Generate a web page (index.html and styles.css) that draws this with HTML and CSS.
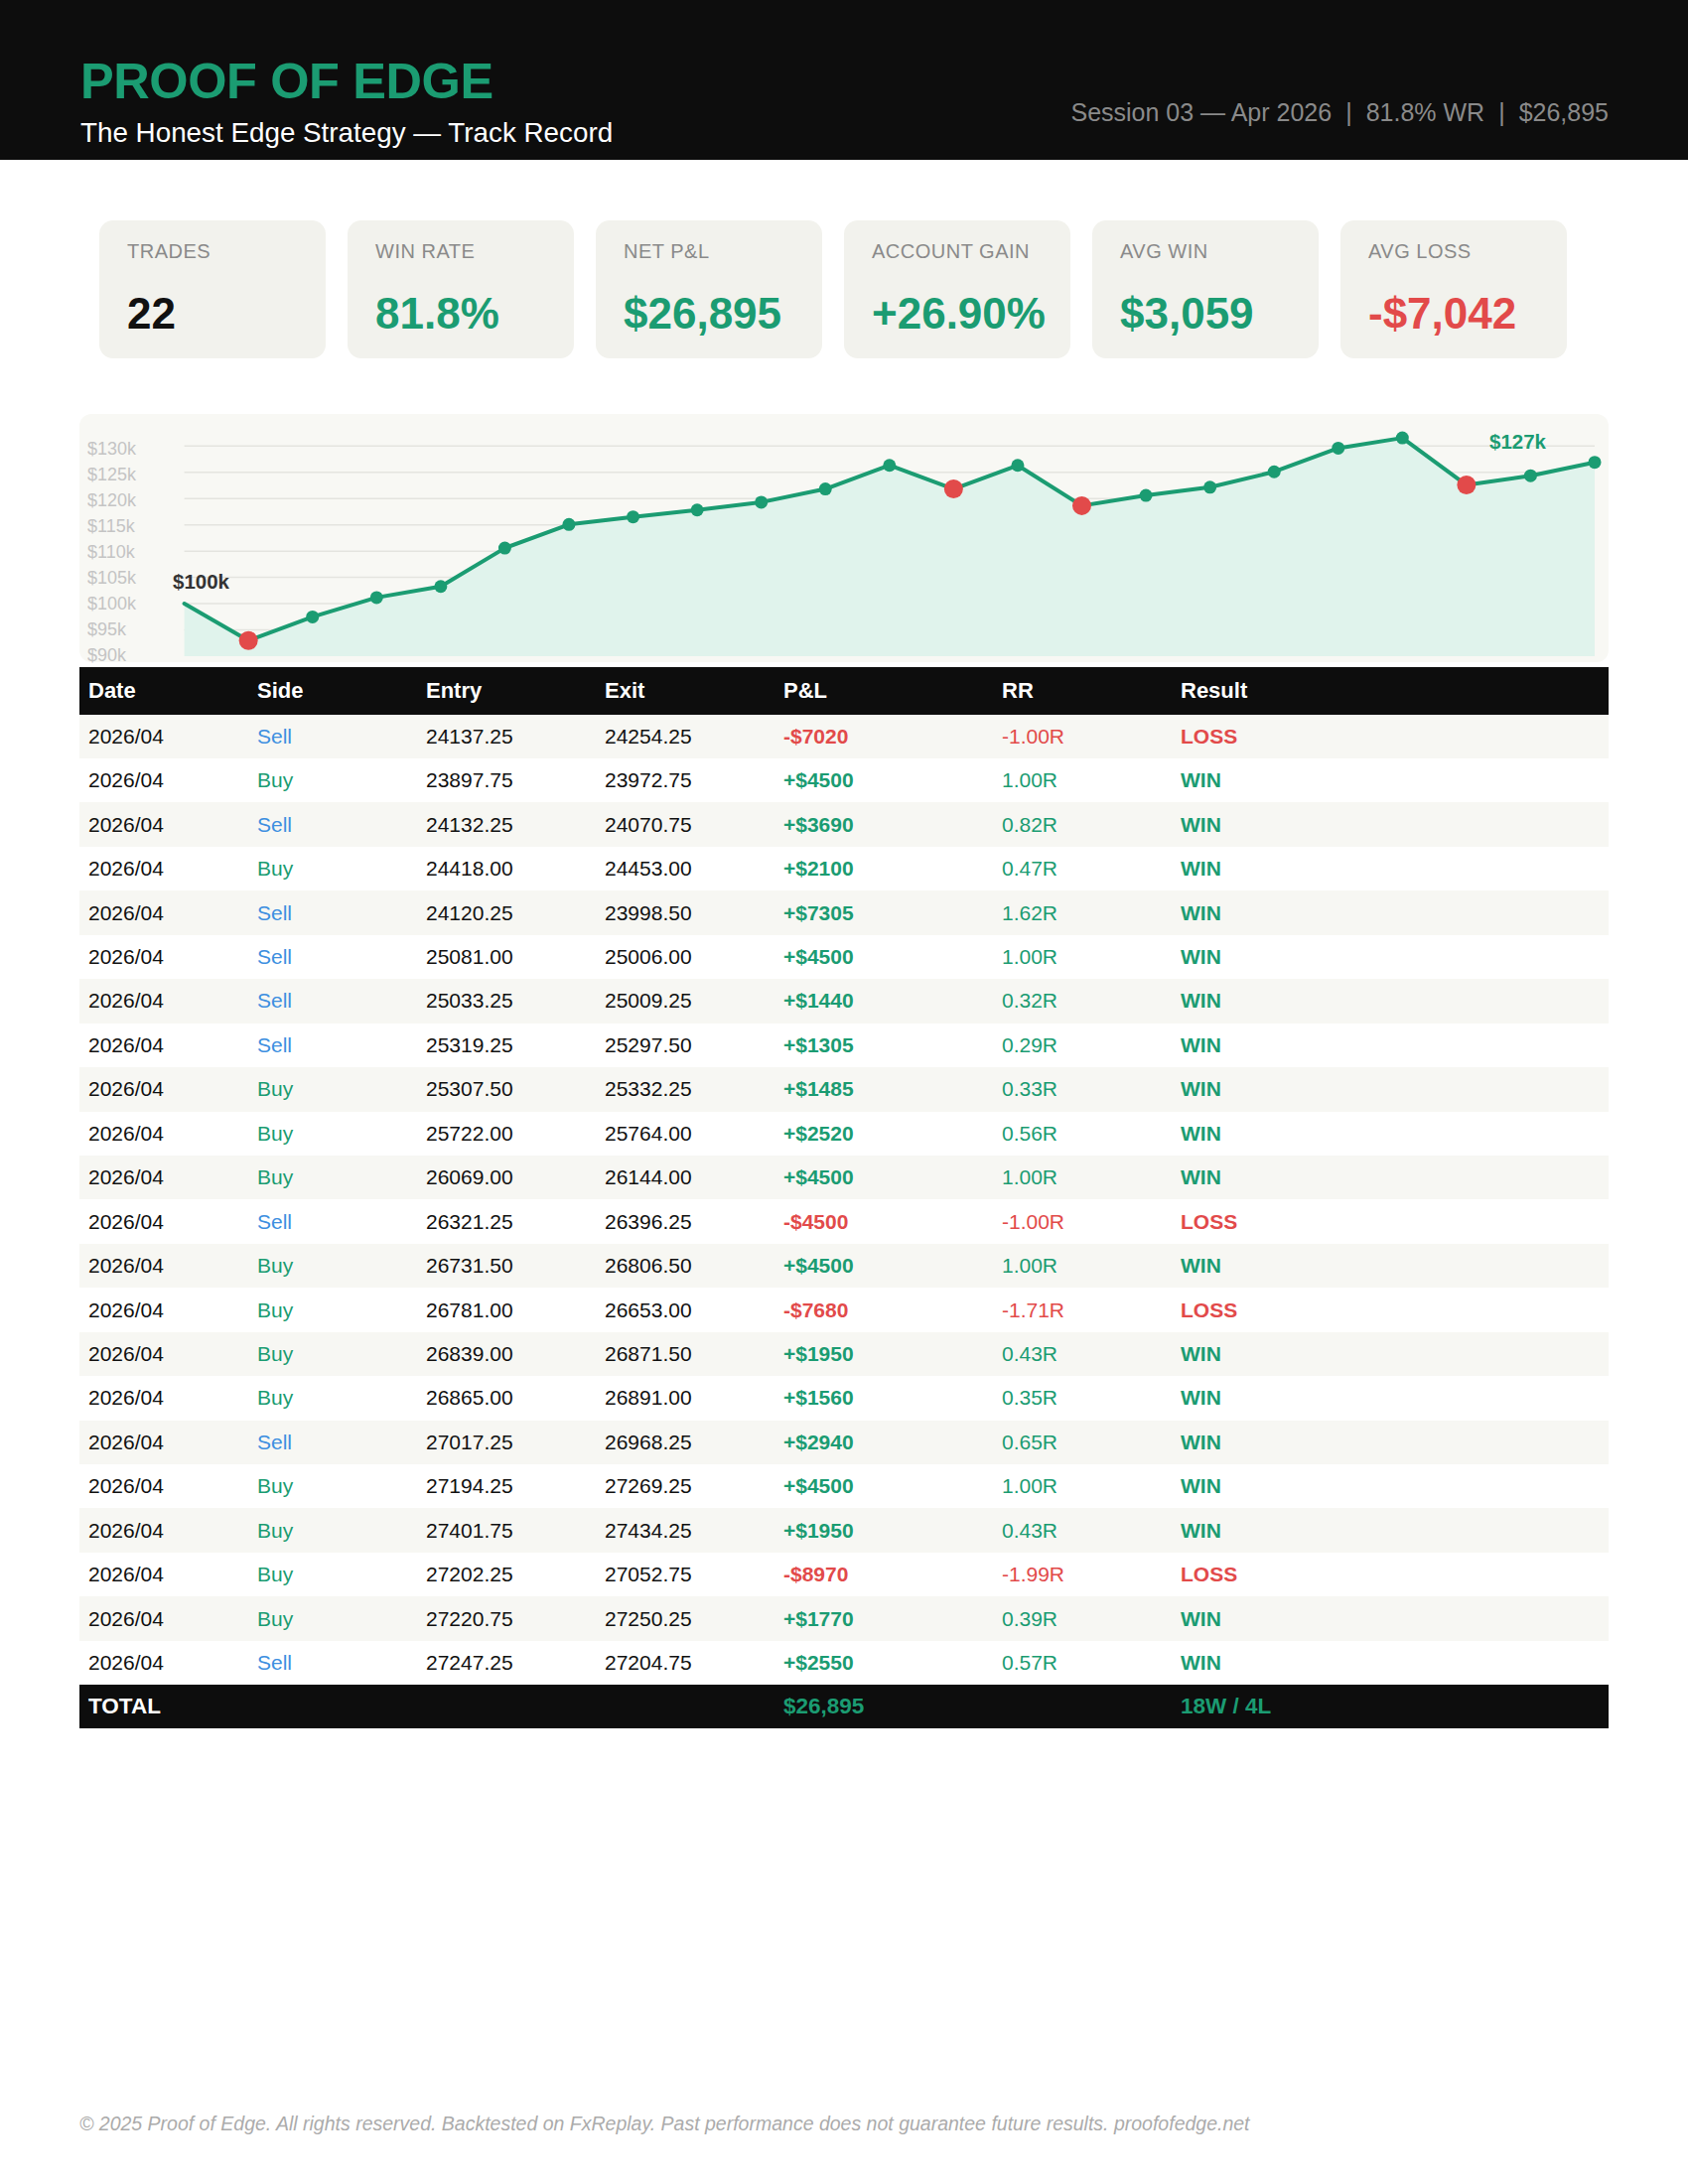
FILE: index.html
```html
<!DOCTYPE html>
<html lang="en">
<head>
<meta charset="utf-8">
<title>Proof of Edge — Track Record</title>
<link rel="stylesheet" href="styles.css">
</head>
<body>
<div class="page">
  <header class="hero">
    <div class="brand">
      <h1 class="title">PROOF OF EDGE</h1>
      <div class="subtitle">The Honest Edge Strategy — Track Record</div>
    </div>
    <div class="meta">Session 03 — Apr 2026<span class="sep">|</span>81.8% WR<span class="sep">|</span>$26,895</div>
  </header>

  <section class="stats">
    <div class="card"><div class="label">TRADES</div><div class="value dark">22</div></div>
    <div class="card"><div class="label">WIN RATE</div><div class="value pos">81.8%</div></div>
    <div class="card"><div class="label">NET P&amp;L</div><div class="value pos">$26,895</div></div>
    <div class="card"><div class="label">ACCOUNT GAIN</div><div class="value pos">+26.90%</div></div>
    <div class="card"><div class="label">AVG WIN</div><div class="value pos">$3,059</div></div>
    <div class="card"><div class="label">AVG LOSS</div><div class="value neg">-$7,042</div></div>
  </section>

  <section class="chart">
    <svg class="chart-svg" width="1540" height="250" viewBox="0 0 1540 250">
      <g class="grid">
        <line x1="105.6" x2="1526" y1="32.28" y2="32.28"/>
        <line x1="105.6" x2="1526" y1="58.75" y2="58.75"/>
        <line x1="105.6" x2="1526" y1="85.21" y2="85.21"/>
        <line x1="105.6" x2="1526" y1="111.68" y2="111.68"/>
        <line x1="105.6" x2="1526" y1="138.14" y2="138.14"/>
        <line x1="105.6" x2="1526" y1="164.61" y2="164.61"/>
        <line x1="105.6" x2="1526" y1="191.07" y2="191.07"/>
        <line x1="105.6" x2="1526" y1="217.54" y2="217.54"/>
      </g>
      <g class="axis">
        <text x="8" y="40.6">$130k</text>
        <text x="8" y="66.7">$125k</text>
        <text x="8" y="92.8">$120k</text>
        <text x="8" y="118.9">$115k</text>
        <text x="8" y="144.9">$110k</text>
        <text x="8" y="171.0">$105k</text>
        <text x="8" y="197.1">$100k</text>
        <text x="8" y="223.2">$95k</text>
        <text x="8" y="249.3">$90k</text>
      </g>
      <polygon class="area" points="105.6,191.07 170.16,228.23 234.73,204.41 299.29,184.88 363.86,173.76 428.42,135.10 492.98,111.28 557.55,103.66 622.11,96.75 686.68,88.89 751.24,75.55 815.80,51.73 880.37,75.55 944.93,51.73 1009.50,92.38 1074.06,82.06 1138.62,73.80 1203.19,58.24 1267.75,34.42 1332.32,24.10 1396.88,71.58 1461.44,62.21 1526.01,48.72 1526.01,244 105.6,244"/>
      <polyline class="line" points="105.6,191.07 170.16,228.23 234.73,204.41 299.29,184.88 363.86,173.76 428.42,135.10 492.98,111.28 557.55,103.66 622.11,96.75 686.68,88.89 751.24,75.55 815.80,51.73 880.37,75.55 944.93,51.73 1009.50,92.38 1074.06,82.06 1138.62,73.80 1203.19,58.24 1267.75,34.42 1332.32,24.10 1396.88,71.58 1461.44,62.21 1526.01,48.72"/>
      <g class="dot-win">
        <circle cx="234.73" cy="204.41" r="6.5"/>
        <circle cx="299.29" cy="184.88" r="6.5"/>
        <circle cx="363.86" cy="173.76" r="6.5"/>
        <circle cx="428.42" cy="135.10" r="6.5"/>
        <circle cx="492.98" cy="111.28" r="6.5"/>
        <circle cx="557.55" cy="103.66" r="6.5"/>
        <circle cx="622.11" cy="96.75" r="6.5"/>
        <circle cx="686.68" cy="88.89" r="6.5"/>
        <circle cx="751.24" cy="75.55" r="6.5"/>
        <circle cx="815.80" cy="51.73" r="6.5"/>
        <circle cx="944.93" cy="51.73" r="6.5"/>
        <circle cx="1074.06" cy="82.06" r="6.5"/>
        <circle cx="1138.62" cy="73.80" r="6.5"/>
        <circle cx="1203.19" cy="58.24" r="6.5"/>
        <circle cx="1267.75" cy="34.42" r="6.5"/>
        <circle cx="1332.32" cy="24.10" r="6.5"/>
        <circle cx="1461.44" cy="62.21" r="6.5"/>
        <circle cx="1526.01" cy="48.72" r="6.5"/>
      </g>
      <g class="dot-loss">
        <circle cx="170.16" cy="228.23" r="9.5"/>
        <circle cx="880.37" cy="75.55" r="9.5"/>
        <circle cx="1009.50" cy="92.38" r="9.5"/>
        <circle cx="1396.88" cy="71.58" r="9.5"/>
      </g>
      <text class="start-label" x="94" y="175.6">$100k</text>
      <text class="end-label" x="1420" y="35.3">$127k</text>
    </svg>
  </section>

  <table class="trades">
    <colgroup>
      <col class="c-date"><col class="c-side"><col class="c-entry"><col class="c-exit"><col class="c-pl"><col class="c-rr"><col class="c-res">
    </colgroup>
    <thead>
      <tr><th>Date</th><th>Side</th><th>Entry</th><th>Exit</th><th>P&amp;L</th><th>RR</th><th>Result</th></tr>
    </thead>
    <tbody>
      <tr><td>2026/04</td><td class="sell">Sell</td><td>24137.25</td><td>24254.25</td><td class="pl neg">-$7020</td><td class="rr neg">-1.00R</td><td class="res neg">LOSS</td></tr>
      <tr><td>2026/04</td><td class="buy">Buy</td><td>23897.75</td><td>23972.75</td><td class="pl pos">+$4500</td><td class="rr pos">1.00R</td><td class="res pos">WIN</td></tr>
      <tr><td>2026/04</td><td class="sell">Sell</td><td>24132.25</td><td>24070.75</td><td class="pl pos">+$3690</td><td class="rr pos">0.82R</td><td class="res pos">WIN</td></tr>
      <tr><td>2026/04</td><td class="buy">Buy</td><td>24418.00</td><td>24453.00</td><td class="pl pos">+$2100</td><td class="rr pos">0.47R</td><td class="res pos">WIN</td></tr>
      <tr><td>2026/04</td><td class="sell">Sell</td><td>24120.25</td><td>23998.50</td><td class="pl pos">+$7305</td><td class="rr pos">1.62R</td><td class="res pos">WIN</td></tr>
      <tr><td>2026/04</td><td class="sell">Sell</td><td>25081.00</td><td>25006.00</td><td class="pl pos">+$4500</td><td class="rr pos">1.00R</td><td class="res pos">WIN</td></tr>
      <tr><td>2026/04</td><td class="sell">Sell</td><td>25033.25</td><td>25009.25</td><td class="pl pos">+$1440</td><td class="rr pos">0.32R</td><td class="res pos">WIN</td></tr>
      <tr><td>2026/04</td><td class="sell">Sell</td><td>25319.25</td><td>25297.50</td><td class="pl pos">+$1305</td><td class="rr pos">0.29R</td><td class="res pos">WIN</td></tr>
      <tr><td>2026/04</td><td class="buy">Buy</td><td>25307.50</td><td>25332.25</td><td class="pl pos">+$1485</td><td class="rr pos">0.33R</td><td class="res pos">WIN</td></tr>
      <tr><td>2026/04</td><td class="buy">Buy</td><td>25722.00</td><td>25764.00</td><td class="pl pos">+$2520</td><td class="rr pos">0.56R</td><td class="res pos">WIN</td></tr>
      <tr><td>2026/04</td><td class="buy">Buy</td><td>26069.00</td><td>26144.00</td><td class="pl pos">+$4500</td><td class="rr pos">1.00R</td><td class="res pos">WIN</td></tr>
      <tr><td>2026/04</td><td class="sell">Sell</td><td>26321.25</td><td>26396.25</td><td class="pl neg">-$4500</td><td class="rr neg">-1.00R</td><td class="res neg">LOSS</td></tr>
      <tr><td>2026/04</td><td class="buy">Buy</td><td>26731.50</td><td>26806.50</td><td class="pl pos">+$4500</td><td class="rr pos">1.00R</td><td class="res pos">WIN</td></tr>
      <tr><td>2026/04</td><td class="buy">Buy</td><td>26781.00</td><td>26653.00</td><td class="pl neg">-$7680</td><td class="rr neg">-1.71R</td><td class="res neg">LOSS</td></tr>
      <tr><td>2026/04</td><td class="buy">Buy</td><td>26839.00</td><td>26871.50</td><td class="pl pos">+$1950</td><td class="rr pos">0.43R</td><td class="res pos">WIN</td></tr>
      <tr><td>2026/04</td><td class="buy">Buy</td><td>26865.00</td><td>26891.00</td><td class="pl pos">+$1560</td><td class="rr pos">0.35R</td><td class="res pos">WIN</td></tr>
      <tr><td>2026/04</td><td class="sell">Sell</td><td>27017.25</td><td>26968.25</td><td class="pl pos">+$2940</td><td class="rr pos">0.65R</td><td class="res pos">WIN</td></tr>
      <tr><td>2026/04</td><td class="buy">Buy</td><td>27194.25</td><td>27269.25</td><td class="pl pos">+$4500</td><td class="rr pos">1.00R</td><td class="res pos">WIN</td></tr>
      <tr><td>2026/04</td><td class="buy">Buy</td><td>27401.75</td><td>27434.25</td><td class="pl pos">+$1950</td><td class="rr pos">0.43R</td><td class="res pos">WIN</td></tr>
      <tr><td>2026/04</td><td class="buy">Buy</td><td>27202.25</td><td>27052.75</td><td class="pl neg">-$8970</td><td class="rr neg">-1.99R</td><td class="res neg">LOSS</td></tr>
      <tr><td>2026/04</td><td class="buy">Buy</td><td>27220.75</td><td>27250.25</td><td class="pl pos">+$1770</td><td class="rr pos">0.39R</td><td class="res pos">WIN</td></tr>
      <tr><td>2026/04</td><td class="sell">Sell</td><td>27247.25</td><td>27204.75</td><td class="pl pos">+$2550</td><td class="rr pos">0.57R</td><td class="res pos">WIN</td></tr>
    </tbody>
    <tfoot>
      <tr><td class="total-label">TOTAL</td><td></td><td></td><td></td><td class="total-val">$26,895</td><td></td><td class="total-val">18W / 4L</td></tr>
    </tfoot>
  </table>

  <footer class="footer">© 2025 Proof of Edge. All rights reserved. Backtested on FxReplay. Past performance does not guarantee future results. proofofedge.net</footer>
</div>
</body>
</html>
```

FILE: styles.css
```css
* { box-sizing: border-box; }

html, body {
  margin: 0;
  padding: 0;
  background: #ffffff;
}

body {
  font-family: "Liberation Sans", Arial, Helvetica, sans-serif;
  color: #111111;
}

.page {
  min-height: 2200px;
  display: flex;
  flex-direction: column;
}

/* Header */
.hero {
  background: #0d0d0d;
  height: 161px;
  padding: 52px 80px 10px 81px;
  display: flex;
  justify-content: space-between;
  align-items: flex-end;
}

.title {
  margin: 0;
  font-size: 50.5px;
  line-height: 60px;
  font-weight: 700;
  letter-spacing: -0.4px;
  color: #1b9c72;
}

.subtitle {
  margin-top: 5px;
  font-size: 27.8px;
  line-height: 34px;
  color: #ffffff;
}

.meta {
  font-size: 25px;
  line-height: 30px;
  color: #8a8a8a;
  padding-bottom: 23px;
  white-space: nowrap;
}

.sep {
  margin: 0 14px;
  color: #8a8a8a;
}

/* Stat cards */
.stats {
  display: flex;
  gap: 22px;
  padding: 0 100px;
  margin-top: 61px;
}

.card {
  width: 228px;
  height: 139px;
  background: #f2f2ed;
  border-radius: 14px;
  padding: 20px 20px 0 28px;
}

.label {
  font-size: 20px;
  line-height: 23px;
  letter-spacing: 0.5px;
  color: #8a8a8a;
}

.value {
  margin-top: 25px;
  font-size: 44px;
  line-height: 51px;
  font-weight: 700;
  white-space: nowrap;
}

.value.dark { color: #111111; }
.pos { color: #1b9c72; }
.neg { color: #e24a4a; }

/* Chart */
.chart {
  margin: 56px 80px 0 80px;
  height: 250px;
  background: #f8f8f4;
  border-radius: 12px;
}

.chart-svg {
  display: block;
  overflow: visible;
}

.grid line {
  stroke: #e4e4df;
  stroke-width: 1.5;
}

.axis text {
  font-family: "Liberation Sans", Arial, sans-serif;
  font-size: 18px;
  fill: #c4c4c4;
}

.area {
  fill: #e0f3ec;
}

.line {
  fill: none;
  stroke: #1b9c72;
  stroke-width: 4;
  stroke-linejoin: round;
  stroke-linecap: round;
}

.dot-win circle { fill: #1b9c72; }
.dot-loss circle { fill: #e24a4a; }

.start-label {
  font-family: "Liberation Sans", Arial, sans-serif;
  font-size: 20.5px;
  font-weight: 700;
  fill: #333333;
}

.end-label {
  font-family: "Liberation Sans", Arial, sans-serif;
  font-size: 20.5px;
  font-weight: 700;
  fill: #1b9c72;
}

/* Table */
.trades {
  margin: 5px 80px 0 80px;
  width: 1540px;
  border-collapse: collapse;
  table-layout: fixed;
  font-size: 21px;
}

.c-date { width: 170px; }
.c-side { width: 170px; }
.c-entry { width: 180px; }
.c-exit { width: 180px; }
.c-pl { width: 220px; }
.c-rr { width: 180px; }
.c-res { width: 440px; }

.trades th,
.trades td {
  padding: 0 9px;
  text-align: left;
  white-space: nowrap;
}

.trades thead tr {
  height: 47.6px;
  background: #0d0d0d;
}

.trades th {
  color: #ffffff;
  font-weight: 700;
  font-size: 22px;
}

.trades tbody tr {
  height: 44.45px;
}

.trades tbody tr:nth-child(odd) {
  background: #f7f7f3;
}

.trades td {
  color: #111111;
}

.trades td.sell { color: #3d8fe0; }
.trades td.buy { color: #1b9c72; }
.trades td.pl { font-weight: 700; }
.trades td.res { font-weight: 700; }
.trades td.pos { color: #1b9c72; }
.trades td.neg { color: #e24a4a; }

.trades tfoot tr {
  height: 44px;
  background: #0d0d0d;
}

.trades tfoot td {
  font-size: 22.5px;
}

.trades td.total-label {
  color: #ffffff;
  font-weight: 700;
}

.trades td.total-val {
  color: #1b9c72;
  font-weight: 700;
}

/* Footer */
.footer {
  margin-top: auto;
  padding: 0 80px 50px 80px;
  font-size: 19.5px;
  line-height: 22px;
  font-style: italic;
  color: #ababab;
}
```
